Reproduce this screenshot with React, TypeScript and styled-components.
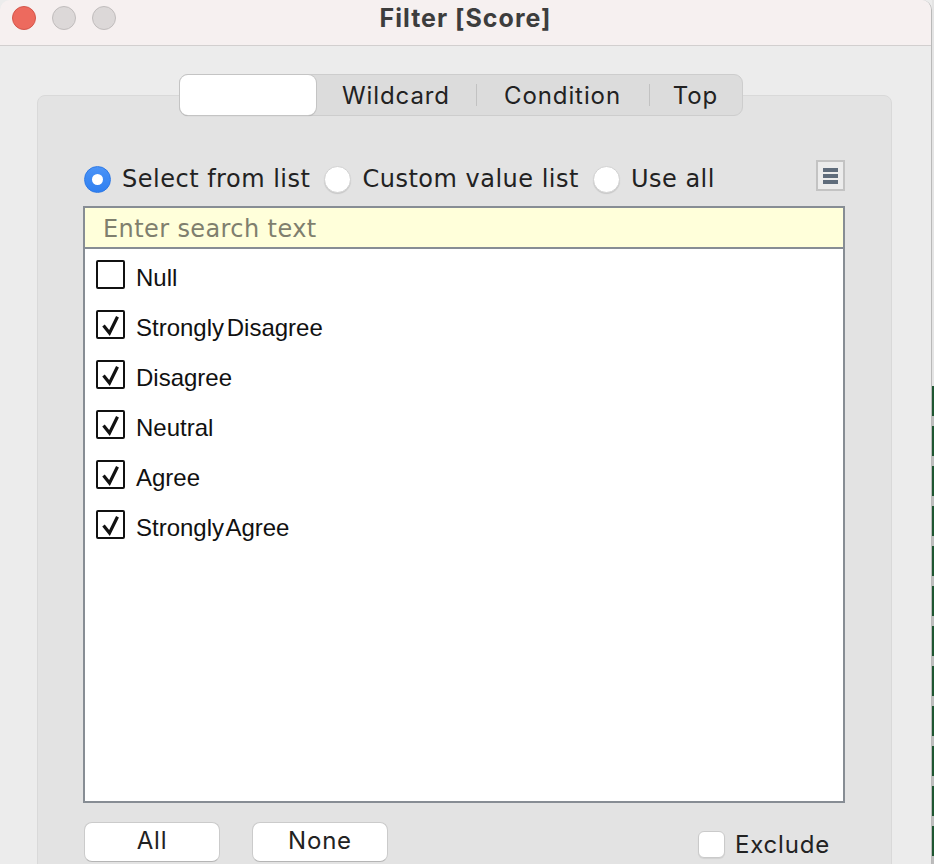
import React from "react";
import styled, { createGlobalStyle } from "styled-components";

const Global = createGlobalStyle`
  html, body { margin: 0; padding: 0; background: #ececec; }
  body { width: 934px; height: 864px; overflow: hidden; }
`;

const Screen = styled.div`
  display: flex;
  width: 934px;
  height: 864px;
  overflow: hidden;
`;

const Window = styled.div`
  width: 932px;
  flex: none;
  box-sizing: border-box;
  border-right: 1px solid #b9b9b9;
  border-radius: 10px 10px 0 0;
  background: #ececec;
  display: flex;
  flex-direction: column;
  overflow: hidden;
`;

const Edge = styled.div`
  width: 2px;
  flex: none;
  background: linear-gradient(#e4e4e4, #e4e4e4) top / 100% 386px no-repeat,
    repeating-linear-gradient(to bottom, #1e5631 0 16px, #bdbdbd 16px 26px, #1e5631 26px 40px);
`;

const TitleBar = styled.div`
  height: 46px;
  box-sizing: border-box;
  border-bottom: 1px solid #d2cfcf;
  background: #f6f0f0;
  display: grid;
  grid-template-columns: 1fr auto 1fr;
  align-items: center;
  padding: 0 12px 9px 12px;
  flex: none;
`;

const Lights = styled.div`
  display: flex;
  gap: 16px;
`;

const Light = styled.span<{ $color: string; $ring: string }>`
  width: 24px;
  height: 24px;
  box-sizing: border-box;
  border-radius: 50%;
  background: ${(p) => p.$color};
  border: 1px solid ${(p) => p.$ring};
`;

const Title = styled.div`
  font-family: Inter, "Liberation Sans", sans-serif;
  font-weight: 700;
  font-size: 25px;
  letter-spacing: 1px;
  color: #3d3d3d;
  line-height: 30px;
`;

const Body = styled.div`
  flex: 1;
  display: flex;
  flex-direction: column;
  padding-top: 28px;
  min-height: 0;
`;

const TabBar = styled.div`
  flex: none;
  display: flex;
  align-self: flex-start;
  margin-left: 179px;
  margin-bottom: -21px;
  position: relative;
  z-index: 1;
  height: 42px;
  box-sizing: border-box;
  border: 1px solid #cdcdcd;
  border-radius: 9px;
  background: #dcdcdc;
`;

const Segment = styled.div<{ $w: number; $active?: boolean; $sep?: boolean }>`
  width: ${(p) => p.$w}px;
  position: relative;
  display: flex;
  align-items: center;
  justify-content: center;
  font-family: Inter, "Liberation Sans", sans-serif;
  font-size: 24px;
  letter-spacing: 0.9px;
  color: #222;
  box-sizing: border-box;
  ${(p) =>
    p.$active
      ? `background: #fff; border-radius: 8px; box-shadow: 0 0 0 1px #c4c4c4, 0 1px 1px rgba(0,0,0,0.25);`
      : ``}
  ${(p) =>
    p.$sep
      ? `&::before { content: ""; position: absolute; left: 0; top: 9px; bottom: 9px; width: 1px; background: #c2c2c2; }`
      : ``}
`;

const Panel = styled.div`
  margin: 0 39px 0 37px;
  flex: 1 0 auto;
  background: #e3e3e3;
  border: 1px solid #d9d9d9;
  border-radius: 8px;
  padding: 67px 46px 40px 45px;
  display: flex;
  flex-direction: column;
`;

const RadioRow = styled.div`
  display: flex;
  align-items: center;
  height: 32px;
  margin-bottom: 11px;
  padding-left: 1px;
`;

const RadioOption = styled.label`
  display: flex;
  align-items: center;
  gap: 11px;
  margin-right: 14px;
  font-family: "DejaVu Sans", sans-serif;
  font-size: 24px;
  letter-spacing: 0.5px;
  color: #222;
`;

const RadioDot = styled.span<{ $on?: boolean }>`
  width: 27px;
  height: 27px;
  box-sizing: border-box;
  border-radius: 50%;
  display: flex;
  align-items: center;
  justify-content: center;
  ${(p) =>
    p.$on
      ? `background: linear-gradient(#4a93f7, #2f7ff0); border: 1px solid #2c78e6;
         &::after { content: ""; width: 11px; height: 11px; border-radius: 50%; background: #fff; }`
      : `background: #fff; border: 1px solid #d2d2d2; box-shadow: 0 1px 1px rgba(0,0,0,0.12);`}
`;

const MenuButton = styled.div`
  margin-left: auto;
  align-self: flex-start;
  margin-top: -3px;
  width: 29px;
  height: 31px;
  box-sizing: border-box;
  border: 2px solid #c3c3c3;
  background: #ececec;
  display: flex;
  flex-direction: column;
  align-items: center;
  justify-content: center;
  gap: 2px;
`;

const MenuBar = styled.span`
  width: 15px;
  height: 4px;
  background: #5f6c7b;
`;

const ListBox = styled.div`
  height: 597px;
  box-sizing: border-box;
  border: 2px solid #878d94;
  display: flex;
  flex-direction: column;
  background: #fff;
`;

const Search = styled.input`
  height: 41px;
  box-sizing: border-box;
  border: none;
  border-bottom: 2px solid #878d94;
  background: #ffffda;
  padding: 3px 0 0 18px;
  margin: 0;
  font-family: "DejaVu Sans", sans-serif;
  font-size: 24px;
  letter-spacing: 0.4px;
  color: #222;
  outline: none;
  &::placeholder { color: #7f7f6e; }
`;

const Items = styled.div`
  flex: 1;
  display: flex;
  flex-direction: column;
`;

const Row = styled.div`
  height: 50px;
  display: flex;
  align-items: center;
  gap: 11px;
  padding-left: 11px;
`;

const Box = styled.span`
  width: 29px;
  height: 29px;
  box-sizing: border-box;
  border: 2px solid #111;
  border-radius: 2px;
  background: #fff;
  display: flex;
  flex: none;
`;

const ItemLabel = styled.span`
  font-family: "Liberation Sans", Arial, sans-serif;
  font-size: 24px;
  color: #111;
  word-spacing: -4px;
  padding-top: 8px;
`;

const BottomRow = styled.div`
  display: flex;
  align-items: center;
  gap: 32px;
  margin-top: 19px;
  padding-left: 1px;
`;

const Button = styled.button`
  width: 136px;
  height: 40px;
  box-sizing: border-box;
  background: #fff;
  border: 1px solid #cbcbcb;
  border-bottom-color: #b5b5b5;
  border-radius: 8px;
  font-family: Inter, "Liberation Sans", sans-serif;
  font-size: 24px;
  letter-spacing: 0.8px;
  color: #222;
  padding: 0 0 3px;
`;

const Exclude = styled.label`
  margin-left: auto;
  margin-right: 15px;
  margin-top: 4px;
  display: flex;
  align-items: center;
  gap: 10px;
  font-family: Inter, "Liberation Sans", sans-serif;
  font-size: 24px;
  letter-spacing: 0.8px;
  color: #222;
`;

const SmallBox = styled.span`
  width: 27px;
  height: 27px;
  box-sizing: border-box;
  background: #fff;
  border: 1px solid #cacaca;
  border-radius: 6px;
  box-shadow: 0 1px 1px rgba(0, 0, 0, 0.08);
`;

const Check = () => (
  <svg width="25" height="25" viewBox="0 0 25 25">
    <path d="M5.5 13.5 L11.5 21 L19.5 4.8" fill="none" stroke="#111" strokeWidth="3.2" strokeLinejoin="miter" />
  </svg>
);

const items: { label: string; checked: boolean }[] = [
  { label: "Null", checked: false },
  { label: "Strongly Disagree", checked: true },
  { label: "Disagree", checked: true },
  { label: "Neutral", checked: true },
  { label: "Agree", checked: true },
  { label: "Strongly Agree", checked: true },
];

export default function App() {
  return (
    <>
      <Global />
      <Screen>
        <Window>
          <TitleBar>
            <Lights>
              <Light $color="#ed6a5e" $ring="#d3564b" />
              <Light $color="#dcd8d8" $ring="#c0bcbc" />
              <Light $color="#dcd8d8" $ring="#c0bcbc" />
            </Lights>
            <Title>Filter [Score]</Title>
            <span />
          </TitleBar>
          <Body>
            <TabBar>
              <Segment $w={136} $active />
              <Segment $w={160}>Wildcard</Segment>
              <Segment $w={173} $sep>Condition</Segment>
              <Segment $w={93} $sep>Top</Segment>
            </TabBar>
            <Panel>
              <RadioRow>
                <RadioOption>
                  <RadioDot $on />
                  Select from list
                </RadioOption>
                <RadioOption>
                  <RadioDot />
                  Custom value list
                </RadioOption>
                <RadioOption>
                  <RadioDot />
                  Use all
                </RadioOption>
                <MenuButton>
                  <MenuBar />
                  <MenuBar />
                  <MenuBar />
                </MenuButton>
              </RadioRow>
              <ListBox>
                <Search placeholder="Enter search text" />
                <Items>
                  {items.map((it) => (
                    <Row key={it.label}>
                      <Box>{it.checked && <Check />}</Box>
                      <ItemLabel>{it.label}</ItemLabel>
                    </Row>
                  ))}
                </Items>
              </ListBox>
              <BottomRow>
                <Button>All</Button>
                <Button>None</Button>
                <Exclude>
                  <SmallBox />
                  Exclude
                </Exclude>
              </BottomRow>
            </Panel>
          </Body>
        </Window>
        <Edge />
      </Screen>
    </>
  );
}
